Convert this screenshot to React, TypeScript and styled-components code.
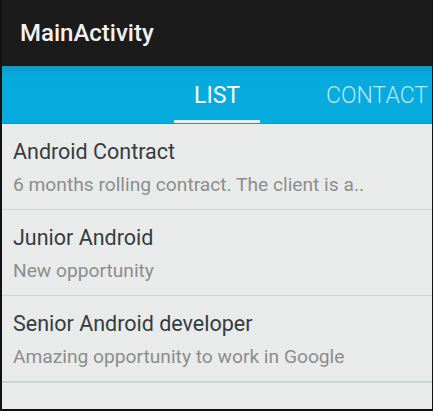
import styled, { createGlobalStyle } from 'styled-components';

const GlobalStyle = createGlobalStyle`
  html, body {
    margin: 0;
    padding: 0;
    background: #111;
  }
  body {
    font-family: Roboto, "Noto Sans", "Liberation Sans", sans-serif;
  }
`;

const Screen = styled.div`
  width: 433px;
  height: 411px;
  box-sizing: border-box;
  border-left: 2px solid #111;
  border-right: 1px solid #111;
  border-bottom: 2px solid #111;
  background: #e9ebea;
  display: flex;
  flex-direction: column;
  overflow: hidden;
`;

const ActionBar = styled.header`
  height: 66px;
  flex: none;
  margin-left: -2px;
  margin-right: -1px;
  padding-left: 20px;
  background: #1b1b1b;
  display: flex;
  align-items: center;
  color: #f2f2f2;
  font-size: 24px;
  font-weight: 500;
`;

const TabBar = styled.nav`
  height: 57px;
  flex: none;
  display: flex;
  align-items: stretch;
  padding-left: 172px;
  gap: 46px;
  background: linear-gradient(#1a8db4 0, #0a9fd0 1px, #07aadd 10px, #07acdf 100%);
  border-bottom: 1px solid #0b9ccc;
  white-space: nowrap;
  overflow: hidden;
`;

const Tab = styled.div<{ $active?: boolean }>`
  position: relative;
  padding: 2px 20px 0;
  display: flex;
  align-items: center;
  font-size: 23px;
  font-weight: ${(p) => (p.$active ? 400 : 300)};
  color: ${(p) => (p.$active ? '#ffffff' : 'rgba(255,255,255,0.72)')};

  &::after {
    content: '';
    display: ${(p) => (p.$active ? 'block' : 'none')};
    position: absolute;
    left: 0;
    right: 0;
    bottom: -1px;
    height: 4px;
    background: #e9ebea;
  }
`;

const List = styled.ul`
  list-style: none;
  margin: 0;
  padding: 0;
`;

const Item = styled.li<{ $last?: boolean }>`
  padding: 16px 0 13px 11px;
  border-bottom: ${(p) => (p.$last ? '2px solid #cdd4d6' : '1px solid #cfd3d3')};
`;

const Title = styled.div`
  font-size: 21.5px;
  line-height: 24px;
  color: #353c3e;
`;

const Subtitle = styled.div`
  margin-top: 10px;
  font-size: 19.2px;
  line-height: 22px;
  color: #8c8d8d;
`;

const jobs = [
  { title: 'Android Contract', desc: '6 months rolling contract. The client is a..' },
  { title: 'Junior Android', desc: 'New opportunity' },
  { title: 'Senior Android developer', desc: 'Amazing opportunity to work in Google' },
];

const App = () => {
  return (
    <Screen>
      <GlobalStyle />
      <ActionBar>MainActivity</ActionBar>
      <TabBar>
        <Tab $active>LIST</Tab>
        <Tab>CONTACT</Tab>
      </TabBar>
      <List>
        {jobs.map((job, i) => (
          <Item key={job.title} $last={i === jobs.length - 1}>
            <Title>{job.title}</Title>
            <Subtitle>{job.desc}</Subtitle>
          </Item>
        ))}
      </List>
    </Screen>
  );
};

export default App;
